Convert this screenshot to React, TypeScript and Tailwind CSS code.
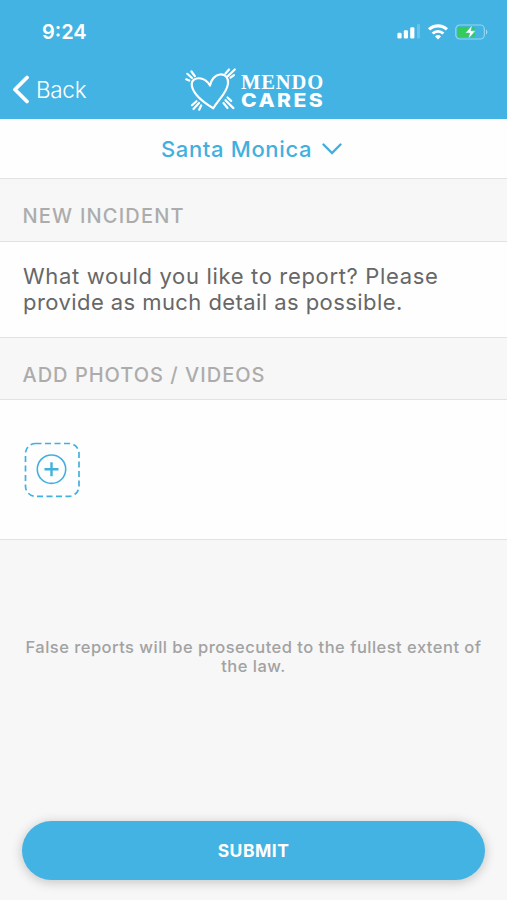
import React from "react";
import clsx from "clsx";

type SectionProps = {
  title: string;
  titleClassName?: string;
  bodyClassName?: string;
  children: React.ReactNode;
};

export default function App() {
  return (
    <div className="flex h-[900px] w-[507px] flex-col overflow-hidden bg-[#f7f7f7] font-['Inter','Liberation_Sans',sans-serif]">
      <header className="h-[119px] shrink-0 bg-[#42b3e3] text-white">
        <StatusBar />
        <NavBar />
      </header>
      <button className="flex h-[59px] shrink-0 items-center justify-center gap-[10px] bg-[#fefefe] pr-[4px] text-[#42b0de]">
        <span className="text-[22px] leading-[26px] font-medium tracking-[0.65px] whitespace-nowrap">
          Santa Monica
        </span>
        <svg width="20" height="12" viewBox="0 0 20 12" fill="none" stroke="currentColor" strokeWidth="2.4">
          <path d="M1.5 1.5 10 10l8.5-8.5" strokeLinecap="round" />
        </svg>
      </button>
      <Section title="NEW INCIDENT" titleClassName="h-[62px] tracking-[1.2px]" bodyClassName="h-[96px] pt-[21px]">
        <p className="text-[22px] leading-[26px] whitespace-nowrap text-[#676767]">
          <span className="tracking-[0.66px]">What would you like to report? Please</span>
          <br />
          <span className="tracking-[0.43px]">provide as much detail as possible.</span>
        </p>
      </Section>
      <Section
        title="ADD PHOTOS / VIDEOS"
        titleClassName="h-[61px] tracking-[1px]"
        bodyClassName="h-[141px] border-b pt-[42px]"
      >
        <AddMediaButton />
      </Section>
      <footer className="flex flex-1 flex-col items-center px-[22px]">
        <p className="mt-[98px] text-center text-[16.5px] leading-[19px] font-medium tracking-[0.48px] whitespace-nowrap text-[#a2a2a2]">
          False reports will be prosecuted to the fullest extent of
          <br />
          the law.
        </p>
        <button className="mt-auto mb-5 h-[59px] w-full rounded-full bg-[#42b3e3] pt-px text-[17.5px] font-bold tracking-[0.5px] text-white shadow-[0_2px_12px_rgba(0,0,0,0.22)]">
          SUBMIT
        </button>
      </footer>
    </div>
  );
}

function StatusBar() {
  return (
    <div className="flex h-[60px] items-center justify-between pt-[3px] pr-[18px] pl-[42px]">
      <span className="text-[20px] font-semibold">9:24</span>
      <div className="flex items-center gap-[7px]">
        <svg width="24" height="15" viewBox="0 0 24 15" fill="currentColor">
          <rect x="0.4" y="8.8" width="4.2" height="5.7" rx="1.3" />
          <rect x="6.8" y="6.2" width="4.2" height="8.3" rx="1.3" />
          <rect x="13.2" y="3.2" width="4.2" height="11.3" rx="1.3" />
          <rect x="20" y="0" width="3" height="14.5" rx="1.2" opacity="0.22" />
        </svg>
        <svg width="20" height="16" viewBox="0 0 20 16" fill="none" stroke="currentColor" strokeWidth="3.2">
          <path d="M1 5.4a13 13 0 0 1 18 0" />
          <path d="M4.6 9.5a7.8 7.8 0 0 1 10.8 0" strokeWidth="2.8" />
          <path d="M10 15.5 7 12.4a4.3 4.3 0 0 1 6 0Z" fill="currentColor" stroke="none" />
        </svg>
        <svg width="34" height="16" viewBox="0 0 34 16" fill="none">
          <rect x="0.8" y="1" width="28.5" height="14" rx="4" stroke="#fff" strokeOpacity="0.45" strokeWidth="1.2" />
          <rect x="2.8" y="2.8" width="17" height="10.4" rx="2" fill="#34cb5a" />
          <path d="M31 5.5c1.8.7 1.8 4.3 0 5Z" fill="#fff" fillOpacity="0.5" />
          <path d="m17.3 1-6.9 8h4.4l-1.5 6 7.2-8.2h-4.6Z" fill="#fff" stroke="#42b3e3" strokeWidth="0.5" />
        </svg>
      </div>
    </div>
  );
}

function NavBar() {
  return (
    <div className="grid h-[59px] grid-cols-[185px_1fr]">
      <button className="flex items-center gap-[7px] pl-[12px] text-[22.5px] font-light tracking-[-0.3px]">
        <svg width="17" height="29" viewBox="0 0 17 29" fill="none" stroke="currentColor" strokeWidth="3.8">
          <path d="M15 2.5 3 14.5l12 12" strokeLinecap="round" strokeLinejoin="round" />
        </svg>
        Back
      </button>
      <div className="flex pt-[7px]">
        <svg
          width="52"
          height="45"
          viewBox="0 0 52 45"
          fill="none"
          stroke="currentColor"
          strokeWidth="2.2"
          strokeLinecap="round"
        >
          <path
            d="M28.3 41.3C22 37.5 9 28.5 7 19.5 5.5 13 11 10.5 16 11.5c4.5 1 7 3.5 9 7C26 13.5 29.5 8 35 7.5c6-.5 8.5 4 8 9-1 9.5-8.5 14.5-14.7 24.8Z"
            strokeLinejoin="round"
          />
          <path d="m6.5 4.5 3.3 4.7M2.3 6.8l4.7 4.2M1.2 12.3l3 1.3" />
          <path d="M44 2.5 40.5 6.5M49.8 2.5 42.5 9.5M49 8.2l-3.5 2.5" />
          <path d="m11.5 34.2-4.5 4M14 36l-5.5 6M16.2 38.5 14.2 42.7" />
          <path d="m38.5 36 4 5M40.5 33.2l7.9 7.9M42.5 30.5l3.7 3.4" />
        </svg>
        <div className="flex flex-col pt-[5px] pl-[4px]">
          <span className="h-[20px] font-['Liberation_Serif',serif] text-[20.5px] leading-[20px] font-bold tracking-[0.9px]">
            MENDO
          </span>
          <span className="h-[17px] origin-left scale-x-[1.14] text-[18.5px] leading-[17px] font-extrabold tracking-[2.1px]">
            CARES
          </span>
        </div>
      </div>
    </div>
  );
}

function Section({ title, titleClassName, bodyClassName, children }: SectionProps) {
  return (
    <section className="shrink-0 border-t border-[#e2e2e2]">
      <h2
        className={clsx(
          "pt-[25px] pl-[22.5px] text-[20px] leading-[24px] font-medium whitespace-nowrap text-[#acacac]",
          titleClassName
        )}
      >
        {title}
      </h2>
      <div className={clsx("border-t border-[#e2e2e2] bg-[#fefefe] pl-[23px]", bodyClassName)}>{children}</div>
    </section>
  );
}

function AddMediaButton() {
  return (
    <button className="block text-[#42b0de]">
      <svg width="58" height="56" viewBox="0 0 58 56" fill="none" stroke="currentColor">
        <rect x="2.5" y="1.5" width="53.5" height="52.8" rx="10" strokeWidth="1.7" strokeDasharray="6 3.5" />
        <circle cx="28.5" cy="27.2" r="14.2" strokeWidth="1.6" />
        <path d="M28.5 20.2v14M21.5 27.2h14" strokeWidth="2.4" />
      </svg>
    </button>
  );
}
